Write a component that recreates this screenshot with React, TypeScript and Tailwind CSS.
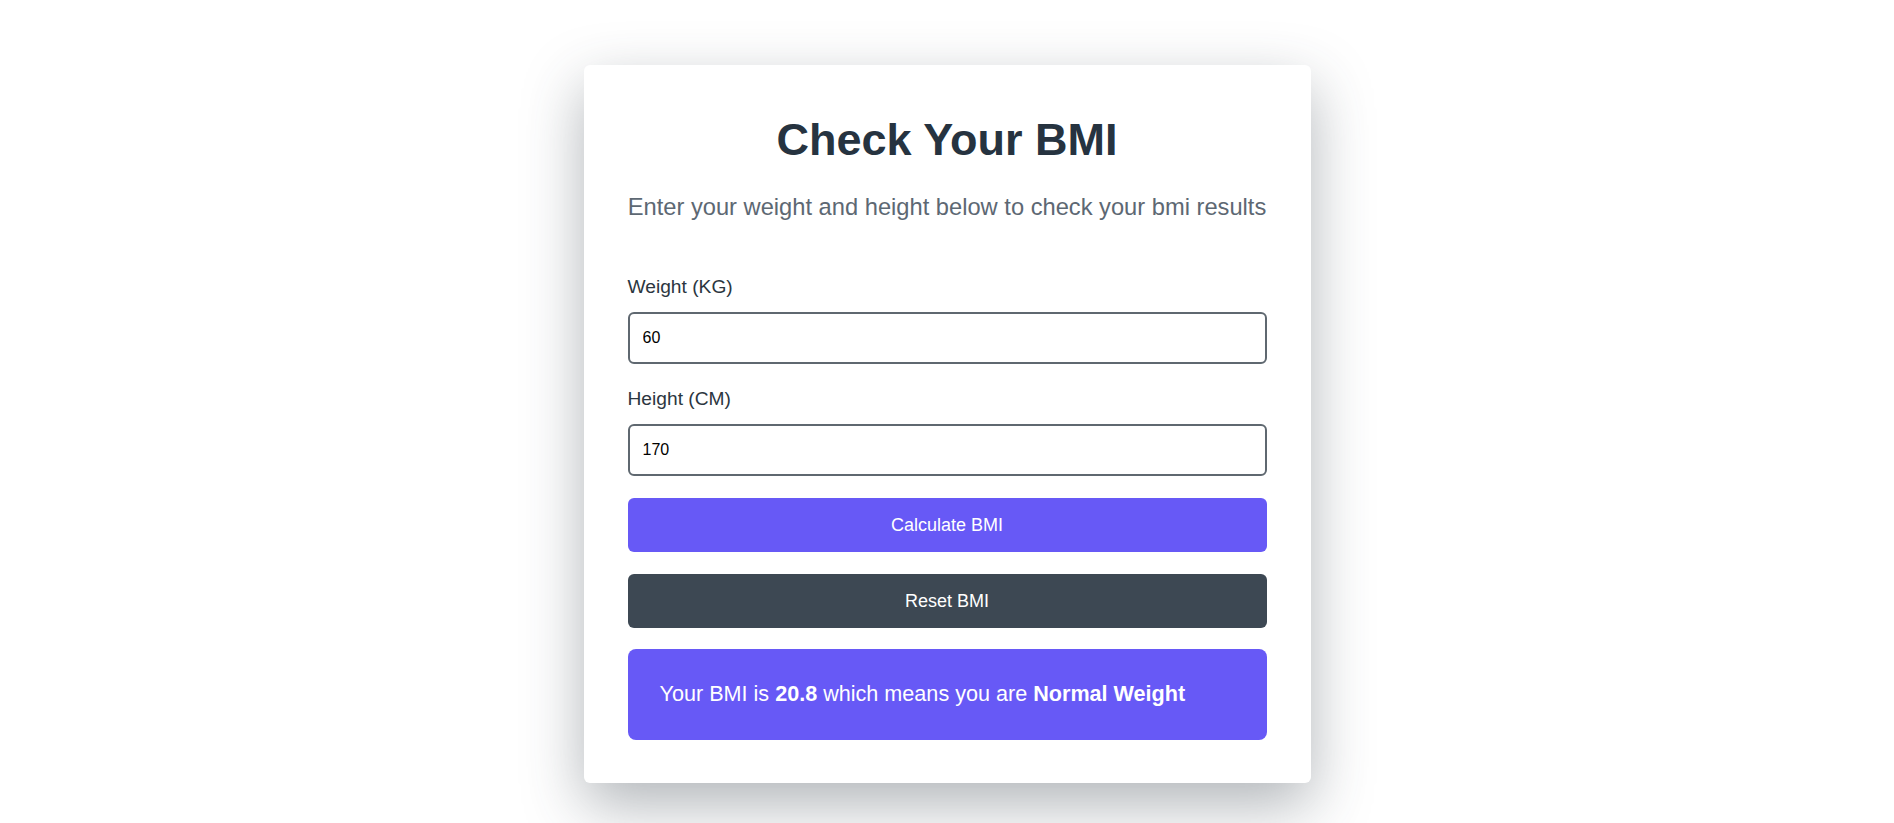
import React, { useState } from "react";

export default function App() {
  const [weight, setWeight] = useState("60");
  const [height, setHeight] = useState("170");
  return (
    <div
      className="min-h-screen w-full bg-white flex justify-center pt-[65px] pb-[40px]"
      style={{ fontFamily: '"Liberation Sans", Arial, sans-serif' }}
    >
      <div className="w-[727px] h-fit bg-white rounded-[6px] shadow-[0_22px_60px_rgba(50,60,70,0.38)] px-[44px] pt-[49px] pb-[43px] flex flex-col">
        <h1 className="text-center font-bold text-[45px] leading-[52px] text-[#263340]">
          Check Your BMI
        </h1>
        <p className="mt-[27px] text-center text-[23.7px] leading-[28px] text-[#5d6873] whitespace-nowrap">
          Enter your weight and height below to check your bmi results
        </p>
        <label className="mt-[55px] text-[19.2px] leading-[22px] text-[#2b3640]">
          Weight (KG)
        </label>
        <input
          className="mt-[14px] h-[52px] w-full rounded-[6px] border-2 border-[#5f6870] px-[13px] text-[16px] text-black outline-none"
          value={weight}
          onChange={(e) => setWeight(e.target.value)}
          style={{ fontFamily: '"Liberation Sans", Arial, sans-serif' }}
        />
        <label className="mt-[24px] text-[19.2px] leading-[22px] text-[#2b3640]">
          Height (CM)
        </label>
        <input
          className="mt-[14px] h-[52px] w-full rounded-[6px] border-2 border-[#5f6870] px-[13px] text-[16px] text-black outline-none"
          value={height}
          onChange={(e) => setHeight(e.target.value)}
          style={{ fontFamily: '"Liberation Sans", Arial, sans-serif' }}
        />
        <button className="mt-[22px] h-[54px] w-full rounded-[6px] bg-[#6759f6] text-white text-[18px]">
          Calculate BMI
        </button>
        <button className="mt-[22px] h-[54px] w-full rounded-[6px] bg-[#3d4853] text-white text-[18px]">
          Reset BMI
        </button>
        <div className="mt-[21px] h-[91px] w-full rounded-[8px] bg-[#6759f6] flex items-center px-[32px] text-white text-[21.6px]">
          <span>
            Your BMI is <b>20.8</b> which means you are <b>Normal Weight</b>
          </span>
        </div>
      </div>
    </div>
  );
}
